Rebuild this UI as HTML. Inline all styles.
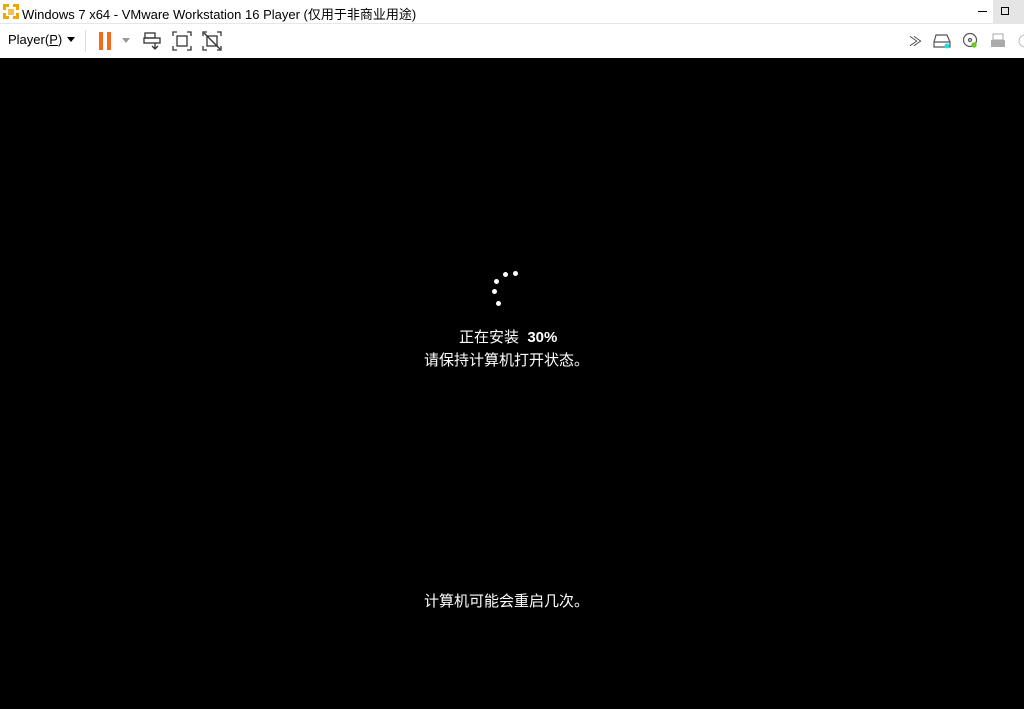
<!DOCTYPE html>
<html><head><meta charset="utf-8"><style>
*{margin:0;padding:0;box-sizing:border-box}
body{width:1024px;height:709px;background:#000;overflow:hidden;font-family:"Liberation Sans","Noto Sans CJK SC",sans-serif;position:relative}
#title{position:absolute;left:0;top:0;width:1024px;height:23px;background:#fff;font-size:13px;color:#000}
#title span{position:absolute;left:22px;top:4px}
#tb{position:absolute;left:0;top:23px;width:1024px;height:35px;background:#fff;border-top:1px solid #e6e6e6}
.a{position:absolute}
.t{position:absolute;color:#fff;font-size:15px;white-space:nowrap}
.d{position:absolute;width:5px;height:5px;border-radius:50%;background:#fff}
</style></head><body>
<div id="title">
<svg class="a" style="left:2px;top:3px" width="18" height="17" viewBox="0 0 18 17"><path d="M1 1h6v3H4v3H1zM11 1h6v6h-3V4h-3zM1 10h3v3h3v3H1zM14 10h3v6h-6v-3h3z" fill="#f0a800"/><path d="M6 6h6v6H6z" fill="#f0a800" opacity=".7"/></svg>
<span>Windows 7 x64 - VMware Workstation 16 Player (仅用于非商业用途)</span>
<div class="a" style="left:978px;top:11px;width:9px;height:1px;background:#000"></div>
<div class="a" style="left:993px;top:0;width:31px;height:23px;background:#e5e5e5"></div>
<div class="a" style="left:1001px;top:7px;width:8px;height:8px;border:1px solid #000"></div>
</div>
<div id="tb">
<div class="a" style="left:8px;top:8px;font-size:13px">Player(<u>P</u>)</div>
<svg class="a" style="left:67px;top:13px" width="9" height="6"><path d="M0 0h8L4 5z" fill="#000"/></svg>
<div class="a" style="left:85px;top:6px;width:1px;height:22px;background:#ddd"></div>
<div class="a" style="left:99px;top:8px;width:4px;height:18px;background:#f26b1d"></div>
<div class="a" style="left:107px;top:8px;width:4px;height:18px;background:#f26b1d"></div>
<svg class="a" style="left:122px;top:14px" width="9" height="6"><path d="M0 0h8L4 5z" fill="#999"/></svg>
<svg class="a" style="left:143px;top:7px" width="20" height="20" fill="none" stroke="#333" stroke-width="1.3"><rect x="2" y="2" width="10" height="5"/><rect x="1" y="7" width="16" height="5"/><path d="M12 12v6M9 15l3 3 3-3"/></svg>
<svg class="a" style="left:172px;top:7px" width="20" height="20" fill="none" stroke="#333" stroke-width="1.3"><path d="M1 5V1h4M15 1h4v4M19 15v4h-4M5 19H1v-4"/><rect x="5" y="5" width="10" height="10"/></svg>
<svg class="a" style="left:202px;top:7px" width="20" height="20" fill="none" stroke="#333" stroke-width="1.3"><path d="M1 5V1h4M15 1h4v4M19 15v4h-4M5 19H1v-4"/><rect x="5" y="5" width="10" height="10"/><path d="M2 2l16 16"/></svg>
<div class="a" style="left:909px;top:7px;font-size:13px;color:#333">≫</div>
<svg class="a" style="left:933px;top:9px" width="18" height="16" fill="none" stroke="#555" stroke-width="1.2"><path d="M3 2h11l3 7v5H1V9z M1 9h16"/><circle cx="14" cy="13" r="2.5" fill="#2dd" stroke="none"/></svg>
<svg class="a" style="left:962px;top:8px" width="18" height="18" fill="none" stroke="#555" stroke-width="1.2"><circle cx="8" cy="8" r="6.5"/><circle cx="8" cy="8" r="1.5"/><circle cx="12" cy="13" r="2.7" fill="#6c2" stroke="none"/></svg>
<svg class="a" style="left:990px;top:9px" width="16" height="16"><rect x="3" y="1" width="10" height="6" fill="none" stroke="#aaa"/><rect x="1" y="7" width="14" height="7" fill="#aaa"/></svg>
<svg class="a" style="left:1018px;top:10px" width="8" height="14"><circle cx="7" cy="7" r="6" fill="none" stroke="#bbb"/></svg>
</div>
<div class="d" style="left:503px;top:272px"></div>
<div class="d" style="left:513px;top:271px"></div>
<div class="d" style="left:494px;top:279px"></div>
<div class="d" style="left:492px;top:289px"></div>
<div class="d" style="left:496px;top:301px"></div>
<div class="t" style="left:459px;top:326px">正在安装&nbsp;&nbsp;<b>30%</b></div>
<div class="t" style="left:424px;top:349px">请保持计算机打开状态。</div>
<div class="t" style="left:424px;top:590px">计算机可能会重启几次。</div>
</body></html>
